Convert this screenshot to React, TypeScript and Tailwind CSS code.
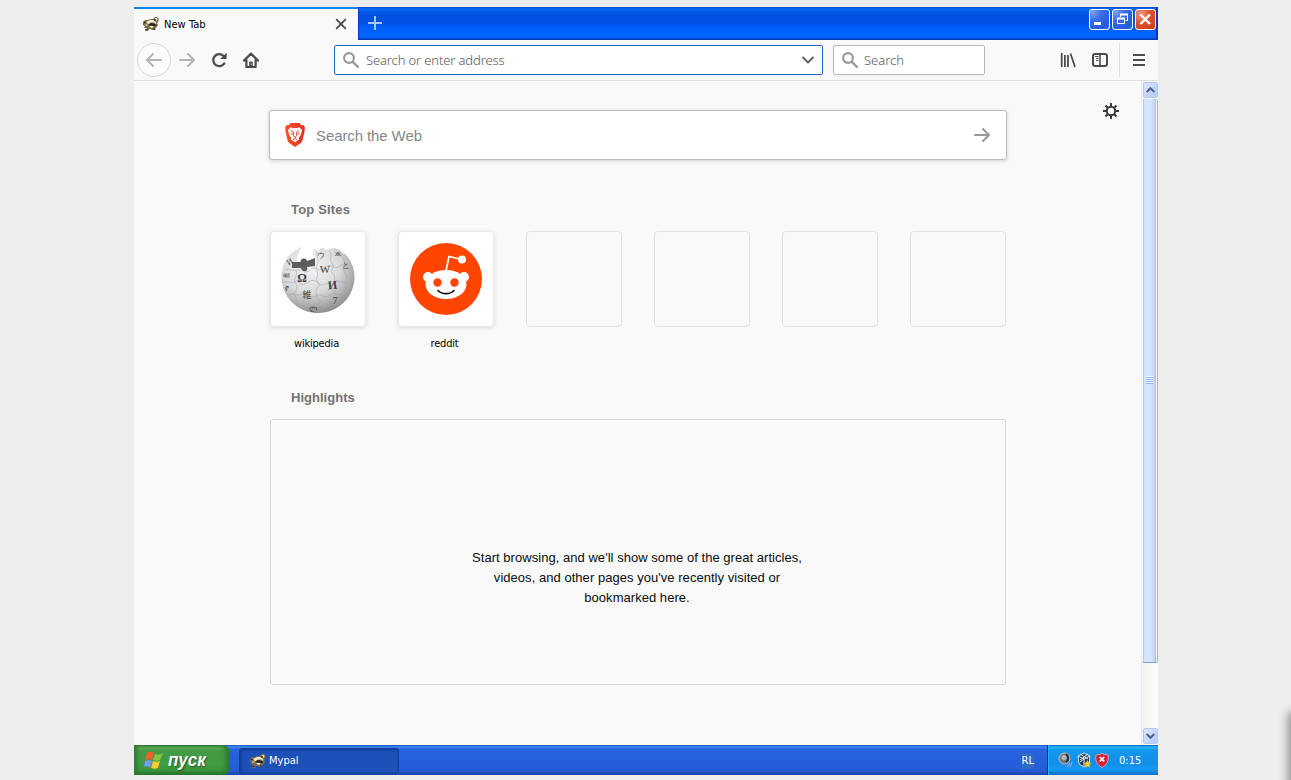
import type { ReactNode } from "react";

const ui = "font-['DejaVu_Sans_Condensed','Noto_Sans',sans-serif]";

function Raccoon() {
  return (
    <svg width="16" height="16" viewBox="0 0 16 16" className="shrink-0">
      <path d="M0 6l2-2 3 0 2-1h3l2-2h2l2 2-1 3-1 1 1 2-1 2-2 1 1 1-1 1H9l-1-1H6l-1 2H2v-1l2-2-3 0 1-2-2-1z" fill="#7d6c4b" />
      <path d="M4 5.500l3-1.500h3l3 2 0 2-2-1.500H8L5.500 8 3.500 7zM12 2h2l.5 1.500-1.500 1.500zM6 10.500l2-1 3 1-2 1.500z" fill="#f4ecd2" />
      <path d="M6 8l2.500-1L12 8l1.500 1.500-2.500 1-2-1-2.500.5zM.5 6h2v1H1zM11 4l1.500-1 .5 1-1 1zM2.500 13h2v1h-2zM10 12.500h2v1h-2z" fill="#28231a" />
      <path d="M2 8.500l3-.500-1 2H2zM13.500 6.500l1 0-.5 1z" fill="#c2b085" />
    </svg>
  );
}

function Magnifier() {
  return (
    <svg width="16" height="16" viewBox="0 0 16 16" className="shrink-0" fill="none" stroke="#999" strokeLinecap="round">
      <circle cx="6" cy="6" r="4.900" strokeWidth="2.100" />
      <path d="M9.800 9.800L15 15" strokeWidth="2.400" />
    </svg>
  );
}

function Arrow({ flip = false, color }: { flip?: boolean; color: string }) {
  return (
    <svg width="16" height="16" viewBox="0 0 16 16" className={flip ? "shrink-0 rotate-180" : "shrink-0"} fill="none" stroke={color} strokeWidth="2" strokeLinecap="round" strokeLinejoin="round">
      <path d="M1 8h14M9 2l6 6-6 6" />
    </svg>
  );
}

function WinButton({ close = false, children }: { close?: boolean; children: ReactNode }) {
  return (
    <div className={close
      ? "flex size-[21px] items-center justify-center rounded-[3px] border border-white bg-[radial-gradient(circle_at_25%_20%,#ef9b7d,#e0522e_45%,#c83c12)]"
      : "flex size-[21px] items-center justify-center rounded-[3px] border border-white bg-[radial-gradient(circle_at_15%_10%,#7da2f1,#3b6fe9_35%,#2459e0_80%,#2f7af5)]"}>
      <svg width="19" height="19" viewBox="0 0 19 19" fill="none" stroke="#fff">{children}</svg>
    </div>
  );
}

function TitleBar() {
  return (
    <div className="flex h-[33px] shrink-0 border-b border-[#0036b0] bg-[linear-gradient(to_bottom,#0047c8_0,#0a6cf6_2px,#0054e3_6px,#0050e0_14px,#0060fa_22px,#0066ff_29px,#0050d8_32px)]">
      <div className="flex h-[33px] w-[224px] items-center border-t-2 border-[#0a84ff] bg-[#f9f9f9] pr-[11px] pl-[9px]">
        <div className="-mt-px"><Raccoon /></div>
        <span className={`ml-[5px] flex-1 pt-px text-[11px] tracking-[0.05px] text-black ${ui}`}>New Tab</span>
        <svg width="12" height="12" viewBox="0 0 12 12" className="-mt-px" stroke="#4a4a4a" strokeWidth="1.800" strokeLinecap="round"><path d="M1.700 1.700l8.600 8.600M10.300 1.700l-8.600 8.600" /></svg>
      </div>
      <div className="flex w-[33px] items-center justify-center border-l border-[#003cc0]">
        <svg width="14" height="14" viewBox="0 0 14 14" stroke="#a9c9fc" strokeWidth="2"><path d="M7 0v14M0 7h14" /></svg>
      </div>
      <div className="flex flex-1 justify-end gap-[2px] border-r-2 border-[#0a37bd] pt-[2px]">
        <WinButton><path d="M4 13.500h7" strokeWidth="3" /></WinButton>
        <WinButton>
          <path d="M7.500 7V4.500h7v6H12.500" /><path d="M7 4.500h8" strokeWidth="2" />
          <path d="M4.500 8.500h7v5h-7z" /><path d="M4 8.500h8" strokeWidth="2" />
        </WinButton>
        <WinButton close><path d="M4.500 4.500l9.500 9.500M14 4.500L4.500 14" strokeWidth="2.400" /></WinButton>
      </div>
    </div>
  );
}

function Toolbar() {
  const field = "pt-[2px] text-[13px] font-light tracking-[-0.13px] text-[#585858] font-['Noto_Sans',sans-serif]";
  return (
    <div className="flex h-[41px] shrink-0 items-center border-b border-[#dededf] bg-[#f9f9f9] pl-[3px]">
      <div className="flex size-[34px] items-center justify-center rounded-full border border-[#d6d6d6] bg-[#fbfbfb]"><Arrow flip color="#b4b4b4" /></div>
      <div className="ml-2"><Arrow color="#b4b4b4" /></div>
      <svg width="16" height="16" viewBox="0 0 16 16" className="ml-4" fill="none" stroke="#4c4c4d">
        <path d="M13.300 11.400A6 6 0 1 1 12.600 4" strokeWidth="2.300" strokeLinecap="round" />
        <path d="M15.600.8v5.800a.5.500 0 0 1-.5.500H9.200z" fill="#4c4c4d" stroke="none" />
      </svg>
      <svg width="16" height="16" viewBox="0 0 16 16" className="ml-4" fill="none" stroke="#4c4c4d" strokeLinecap="round" strokeLinejoin="round">
        <path d="M1 8.600l7-7 7 7M3.400 8v7h9.200V8" strokeWidth="2.200" />
        <path d="M6.200 15V9.600h3.600V15z" fill="#4c4c4d" stroke="none" /><path d="M8.600 12.200h.2" stroke="#fff" strokeWidth="1" />
      </svg>
      <div className="ml-[75px] flex h-[30px] w-[489px] items-center rounded-[2px] border border-[#2467c9] bg-white pr-[8px] pl-[8px]">
        <Magnifier />
        <span className={`ml-[7px] flex-1 ${field}`}>Search or enter address</span>
        <svg width="12" height="8" viewBox="0 0 12 8" fill="none" stroke="#666" strokeWidth="2" strokeLinecap="round" strokeLinejoin="round"><path d="M1 1.500l5 5 5-5" /></svg>
      </div>
      <div className="ml-[10px] flex h-[30px] w-[152px] items-center rounded-[2px] border border-[#b9b9ba] bg-white pl-[8px] shadow-[0_1px_3px_rgba(0,0,0,.05)]">
        <Magnifier />
        <span className={`ml-[6px] tracking-normal ${field}`}>Search</span>
      </div>
      <div className="flex-1" />
      <svg width="16" height="16" viewBox="0 0 16 16" stroke="#4c4c4d" strokeWidth="1.800"><path d="M1.700 1v14M4.900 3v12M8 3v12M10.500 1.500l4.500 13.500" /></svg>
      <svg width="16" height="16" viewBox="0 0 16 16" className="ml-4" fill="none" stroke="#4c4c4d">
        <rect x="1" y="2" width="14" height="12" rx="2.200" strokeWidth="2" /><path d="M8 2v12" strokeWidth="1.600" /><path d="M3 4.500h3.500M4 6.500h2.500M4 8.500h2.500" />
      </svg>
      <div className="ml-[11px] h-[34px] w-px bg-[#dcdcdc]" />
      <svg width="12" height="14" viewBox="0 0 12 14" className="mr-[13px] ml-[13px]" stroke="#4c4c4d" strokeWidth="2"><path d="M0 2h12M0 7h12M0 12h12" /></svg>
    </div>
  );
}

function BraveLogo() {
  return (
    <svg width="20" height="24" viewBox="0 0 20 24">
      <defs><linearGradient id="brave"><stop stopColor="#fa5424" /><stop offset="1" stopColor="#df2e23" /></linearGradient></defs>
      <path d="M5.500 0h9l2 2.200 1.800-.1L20 4.400l-.5 2 .3 1-2.400 10c-.3 1.300-1 2-2 2.800L10 24l-5.400-3.800c-1-.8-1.700-1.500-2-2.800L.2 7.400l.3-1-.5-2 1.700-2.300 1.800.1z" fill="url(#brave)" />
      <path d="M5.500 4.300l2.500.8h4l2.500-.8 2.600 3-.9 3-.8 2.500-1.600 2 .4 1.500-4.200 3-4.200-3 .4-1.500-1.600-2-.8-2.500-.9-3z" fill="#fff" />
      <path d="M5.500 7.800l2.800.7M14.500 7.800l-2.800.7M5.500 10.500l3 .8M14.500 10.500l-3 .8M8.600 9l-.4 3 .9 1.800h1.800l.9-1.800-.4-3M10 14v1.500M8 16.500l2-.9 2 .9" fill="none" stroke="#ed4125" strokeWidth=".9" />
    </svg>
  );
}

function WikipediaGlobe() {
  return (
    <svg width="96" height="96" viewBox="0 0 96 96">
      <defs><radialGradient id="globe" cx=".4" cy=".3" r=".72"><stop stopColor="#f6f6f6" /><stop offset=".55" stopColor="#dadadb" /><stop offset="1" stopColor="#8d8d8f" /></radialGradient></defs>
      <path d="M25 19L28 19L29 16L31 17L29 22L27 26L27 31L44 29L45 27L43 24L43 19L46 18L48 20L51 17L54 17L56 19L60 18L64 17L70 19L71 21L75 23C81 29 84.500 37 84.500 46C84.500 66 68 82 48 82C28 82 11.500 66 11.500 46C11.500 35 16.500 26 22 22Z" fill="url(#globe)" />
      <path d="M22 31h9c-2-4 6-5 6-1l8-3v8l-8 1c2 5-5 6-6 1l-9 0z" fill="#5c5c5e" />
      <g fill="none" stroke="#a2a2a4" strokeWidth=".6">
        <path d="M15 38c5 1 9 2 14 1 4-1 4 3 8 2s3-4 7-4 4 4 8 1 8-5 12-2 8-5 11-1 4 2 6 2" />
        <path d="M12 52c6-4 9 2 13-1s5 5 10 2 8-6 13-1 6-1 11 1 5-4 10-3 7 5 14-2" />
        <path d="M17 66c6-7 10 1 14-3s9 6 15 2 8 4 14-1 10 3 17-3" />
        <path d="M26 40c2 5-3 8-1 11s3 7 0 10 4 7 1 10 2 3 4 6M47 21c-1 6 3 8 0 13s3 8 0 12 5 6 1 10-2 10 3 15M59 20c5 4-1 8 3 12s-3 8 1 11 0 8 2 11-3 8 2 11-2 6-3 11M71 24c3 5 5 7 3 12s5 8 2 14 2 7-1 13" />
      </g>
      <g className="font-['Liberation_Serif',serif]" fill="#404042" textAnchor="middle">
        <text x="32" y="51" fontSize="12" fontWeight="700">Ω</text><text x="55" y="42" fontSize="11">W</text><text x="63" y="58" fontSize="12" fontWeight="700" transform="rotate(-6 63 58)">И</text>
        <text x="37" y="67" fontSize="9" className="font-['Noto_Sans_CJK_JP',sans-serif]">維</text>
        <text x="51" y="27" fontSize="8">ウ</text><text x="68" y="25" fontSize="7">Ж</text><text x="76" y="37" fontSize="8">と</text>
        <text x="65" y="73" fontSize="10">7</text><text x="21" y="33" fontSize="8" transform="rotate(-30 21 33)">И</text><text x="16" y="47" fontSize="7">का</text><text x="17" y="60" fontSize="8">የ</text><text x="43" y="80" fontSize="8">ლ</text>
      </g>
    </svg>
  );
}

function RedditLogo() {
  return (
    <svg width="96" height="96" viewBox="0 0 96 96">
      <circle cx="48" cy="48" r="36" fill="#ff4500" />
      <path d="M48 40l3-14.500 13 3" fill="none" stroke="#fff" strokeWidth="1.700" />
      <g fill="#fff"><circle cx="64" cy="28.500" r="4" /><circle cx="30" cy="46" r="5" /><circle cx="66" cy="46" r="5" /><ellipse cx="48" cy="53.500" rx="20.500" ry="14.500" /></g>
      <circle cx="39.500" cy="51.500" r="4.200" fill="#ff4500" /><circle cx="56.500" cy="51.500" r="4.200" fill="#ff4500" />
      <path d="M40 59.500c4 4.200 12 4.200 16 0" fill="none" stroke="#111" strokeWidth="1.700" strokeLinecap="round" />
    </svg>
  );
}

function Site({ label, children }: { label: string; children: ReactNode }) {
  return (
    <div className="w-24">
      <div className="size-24 rounded-[4px] border border-[#e9e9e9] bg-white shadow-[0_1px_4px_rgba(0,0,0,.13)]"><div className="-m-px">{children}</div></div>
      <div className={`pt-[10px] pr-[3px] text-center text-[11px] leading-[14px] tracking-[-0.2px] text-black ${ui}`}>{label}</div>
    </div>
  );
}

function Scrollbar() {
  const button = "flex h-[16px] w-[15px] items-center justify-center rounded-[2px] border border-white bg-[linear-gradient(135deg,#dce7ff,#b3c9fa)] outline-1 -outline-offset-1 outline-[#b4c8f4]";
  return (
    <div className="flex w-[17px] shrink-0 flex-col items-center border-l border-[#e8e8ee] bg-[linear-gradient(to_right,#f3f2ec,#fefefb)] py-px">
      <div className={button}><svg width="9" height="6" viewBox="0 0 9 6" fill="none" stroke="#4d6185" strokeWidth="2"><path d="M.7 5l3.800-3.800L8.300 5" /></svg></div>
      <div className="mt-px flex h-[564px] w-[16px] items-center justify-center rounded-[2px] border-r border-r-[#9fb5dd] border-b border-b-[#7f9fd8] bg-[linear-gradient(to_right,#fff_0,#fff_1px,#a6c8fb_1px,#a6c8fb_2px,#d3e3ff_2px,#d6e6ff_9px,#bcd4fc_13px,#9cc0f8_13px,#9cc0f8_14px,#fff_14px)]">
        <div className="mb-[2px] h-[8px] w-[7px] bg-[repeating-linear-gradient(to_bottom,#fff_0,#fff_1px,#90b8f5_1px,#90b8f5_2px)]" />
      </div>
      <div className="flex-1" />
      <div className={button}><svg width="9" height="6" viewBox="0 0 9 6" fill="none" stroke="#4d6185" strokeWidth="2"><path d="M.7 1l3.800 3.800L8.300 1" /></svg></div>
    </div>
  );
}

function NewTabPage() {
  const heading = "pl-[21px] text-[13px] leading-[16px] font-bold text-[#737373]";
  return (
    <main className="relative min-w-0 flex-1 bg-[#f9f9f9] pt-[29px] pl-[135px] font-['Liberation_Sans',sans-serif]">
      <div className="absolute top-[22px] right-[22px]">
        <svg width="16" height="16" viewBox="0 0 16 16" fill="none" stroke="#38383a"><circle cx="8" cy="8" r="4.200" strokeWidth="2" /><path d="M8 0v4M8 12v4M0 8h4M12 8h4M2.500 2.500l2.700 2.700M10.800 10.800l2.700 2.700M13.500 2.500l-2.700 2.700M5.200 10.800l-2.700 2.700" strokeWidth="2" /></svg>
      </div>
      <div className="flex h-[50px] w-[738px] items-center rounded-[3px] border border-[#bdbdbd] bg-white pr-[16px] pl-[15px] shadow-[0_1px_4px_rgba(0,0,0,.17)]">
        <BraveLogo />
        <span className="ml-[11px] flex-1 pt-[2px] text-[15px] tracking-[-0.1px] text-[#868686]">Search the Web</span>
        <Arrow color="#999" />
      </div>
      <div className="ml-px w-[736px]">
        <h2 className={`${heading} mt-[42px] tracking-[0.18px]`}>Top Sites</h2>
        <div className="mt-[13px] flex h-[122px] gap-8">
          <Site label="wikipedia"><WikipediaGlobe /></Site>
          <Site label="reddit"><RedditLogo /></Site>
          {[0, 1, 2, 3].map((n) => <div key={n} className="size-24 rounded-[4px] border border-[#e1e1e2]" />)}
        </div>
        <h2 className={`${heading} mt-[37px] tracking-[0.02px]`}>Highlights</h2>
        <div className="mt-[13px] flex h-[266px] items-center justify-center rounded-[3px] border border-[#d7d7db] pt-[51px] pr-[2px] text-center text-[13px] leading-5 tracking-[0.04px] text-[#0c0c0d]">
          <p>Start browsing, and we'll show some of the great articles,<br />videos, and other pages you've recently visited or<br />bookmarked here.</p>
        </div>
      </div>
    </main>
  );
}

function Taskbar() {
  return (
    <div className="flex h-[30px] shrink-0 bg-[linear-gradient(to_bottom,#1f4fb4_0,#3c8af5_2px,#2762df_4px,#245edb_20px,#245bd4_26px,#1941a5_30px)]">
      <div className="flex w-[96px] items-center rounded-r-[8px] bg-[linear-gradient(to_bottom,#2d6f30_0,#6ab562_2px,#459a45_6px,#409c43_20px,#3a943c_26px,#256c2b_30px)] pl-[10px] shadow-[inset_-4px_0_5px_#2a772d,inset_3px_0_4px_#2c7a30]">
        <svg width="19" height="19" viewBox="0 0 19 19">
          <path d="M3 2c3-2 5-1 7 0L8 9C6 8 4 8 1 9z" fill="#ef6032" /><path d="M11 3c3 1 5 1 8-1l-3 7c-2 1-4 1-7 0z" fill="#83c940" />
          <path d="M1 10c3-1 5-1 7 0l-2 6c-2-1-4-1-6 0z" fill="#739ff4" /><path d="M9 10c3 1 5 1 7 0l-2 7c-3 1-5 1-7 0z" fill="#fbc936" />
        </svg>
        <span className="ml-[5px] text-[18px] font-bold italic text-white [text-shadow:1px_1px_2px_#24512a] font-['Liberation_Sans',sans-serif]"><span className="inline-block origin-left scale-x-[0.94]">пуск</span></span>
      </div>
      <div className="mt-[3px] ml-[9px] flex h-[26px] w-[160px] items-center rounded-[3px] border border-[#143d96] bg-[#1d50b8] pl-[10px] shadow-[inset_1px_1px_3px_#12388e]">
        <Raccoon />
        <span className={`ml-[3px] pt-px text-[11px] text-white ${ui}`}>Mypal</span>
      </div>
      <div className="flex-1" />
      <div className={`mr-[13px] flex items-center pt-px text-[11px] text-white ${ui}`}><span className="bg-[#316ac5] leading-4">RL</span></div>
      <div className="flex w-[111px] items-center border-l border-[#092e80] bg-[linear-gradient(to_bottom,#0c59b9_0,#21baf5_2px,#1299ed_5px,#118eea_18px,#149aef_25px,#0d69c3_30px)] pl-[10px] shadow-[inset_1px_0_1px_#18bbff]">
        <svg width="16" height="16" viewBox="0 0 16 16"><circle cx="6.500" cy="6.500" r="5.500" fill="#72777b" stroke="#c1c3c2" /><circle cx="6" cy="5.500" r="2.500" fill="#b2b6b8" /><path d="M8 2c3 2 3 6 0 8" stroke="#2c3034" strokeWidth="2" fill="none" /><path d="M9 15l3-4M12 15l2-5" stroke="#83a5ef" strokeWidth="1.300" /></svg>
        <svg width="16" height="16" viewBox="0 0 16 16" className="ml-[2px]"><path d="M8 1l6 3-1 8-5 3-5-3-1-8z" fill="#25425c" stroke="#d6e5ed" /><path d="M2 4l6 3 6-3M8 7v7M4 2l8 5M12 2L4 8M4 10l4-3" stroke="#dfe9ef" fill="none" /><path d="M11.500 8l1.300 2.500 2.700.3-2 2 .5 2.800-2.500-1.300L9 15.600l.5-2.800-2-2 2.700-.3z" fill="#ffc829" /></svg>
        <svg width="14" height="16" viewBox="0 0 14 16" className="ml-[3px]"><path d="M7 1l2 1.500 4 .3c1 6-1 10-6 12.700C2 12.800 0 8.800 1 2.800l4-.3z" fill="#d51f35" stroke="#d9a3ad" /><path d="M4.800 5l4.400 4.400M9.200 5L4.800 9.400" stroke="#fff" strokeWidth="1.700" /></svg>
        <span className={`ml-[10px] pt-[2px] text-[11px] text-white ${ui}`}>0:15</span>
      </div>
    </div>
  );
}

export default function App() {
  return (
    <div className="relative h-[780px] w-[1291px] overflow-hidden bg-[#eee] pt-[7px] pl-[134px]">
      <div className="flex h-[768px] w-[1024px] flex-col overflow-hidden">
        <TitleBar />
        <Toolbar />
        <div className="flex min-h-0 flex-1"><NewTabPage /><Scrollbar /></div>
        <Taskbar />
      </div>
      <div className="absolute top-[715px] left-[1291px] h-[90px] w-5 shadow-[0_0_10px_3px_rgba(0,0,0,.4)]" />
    </div>
  );
}
